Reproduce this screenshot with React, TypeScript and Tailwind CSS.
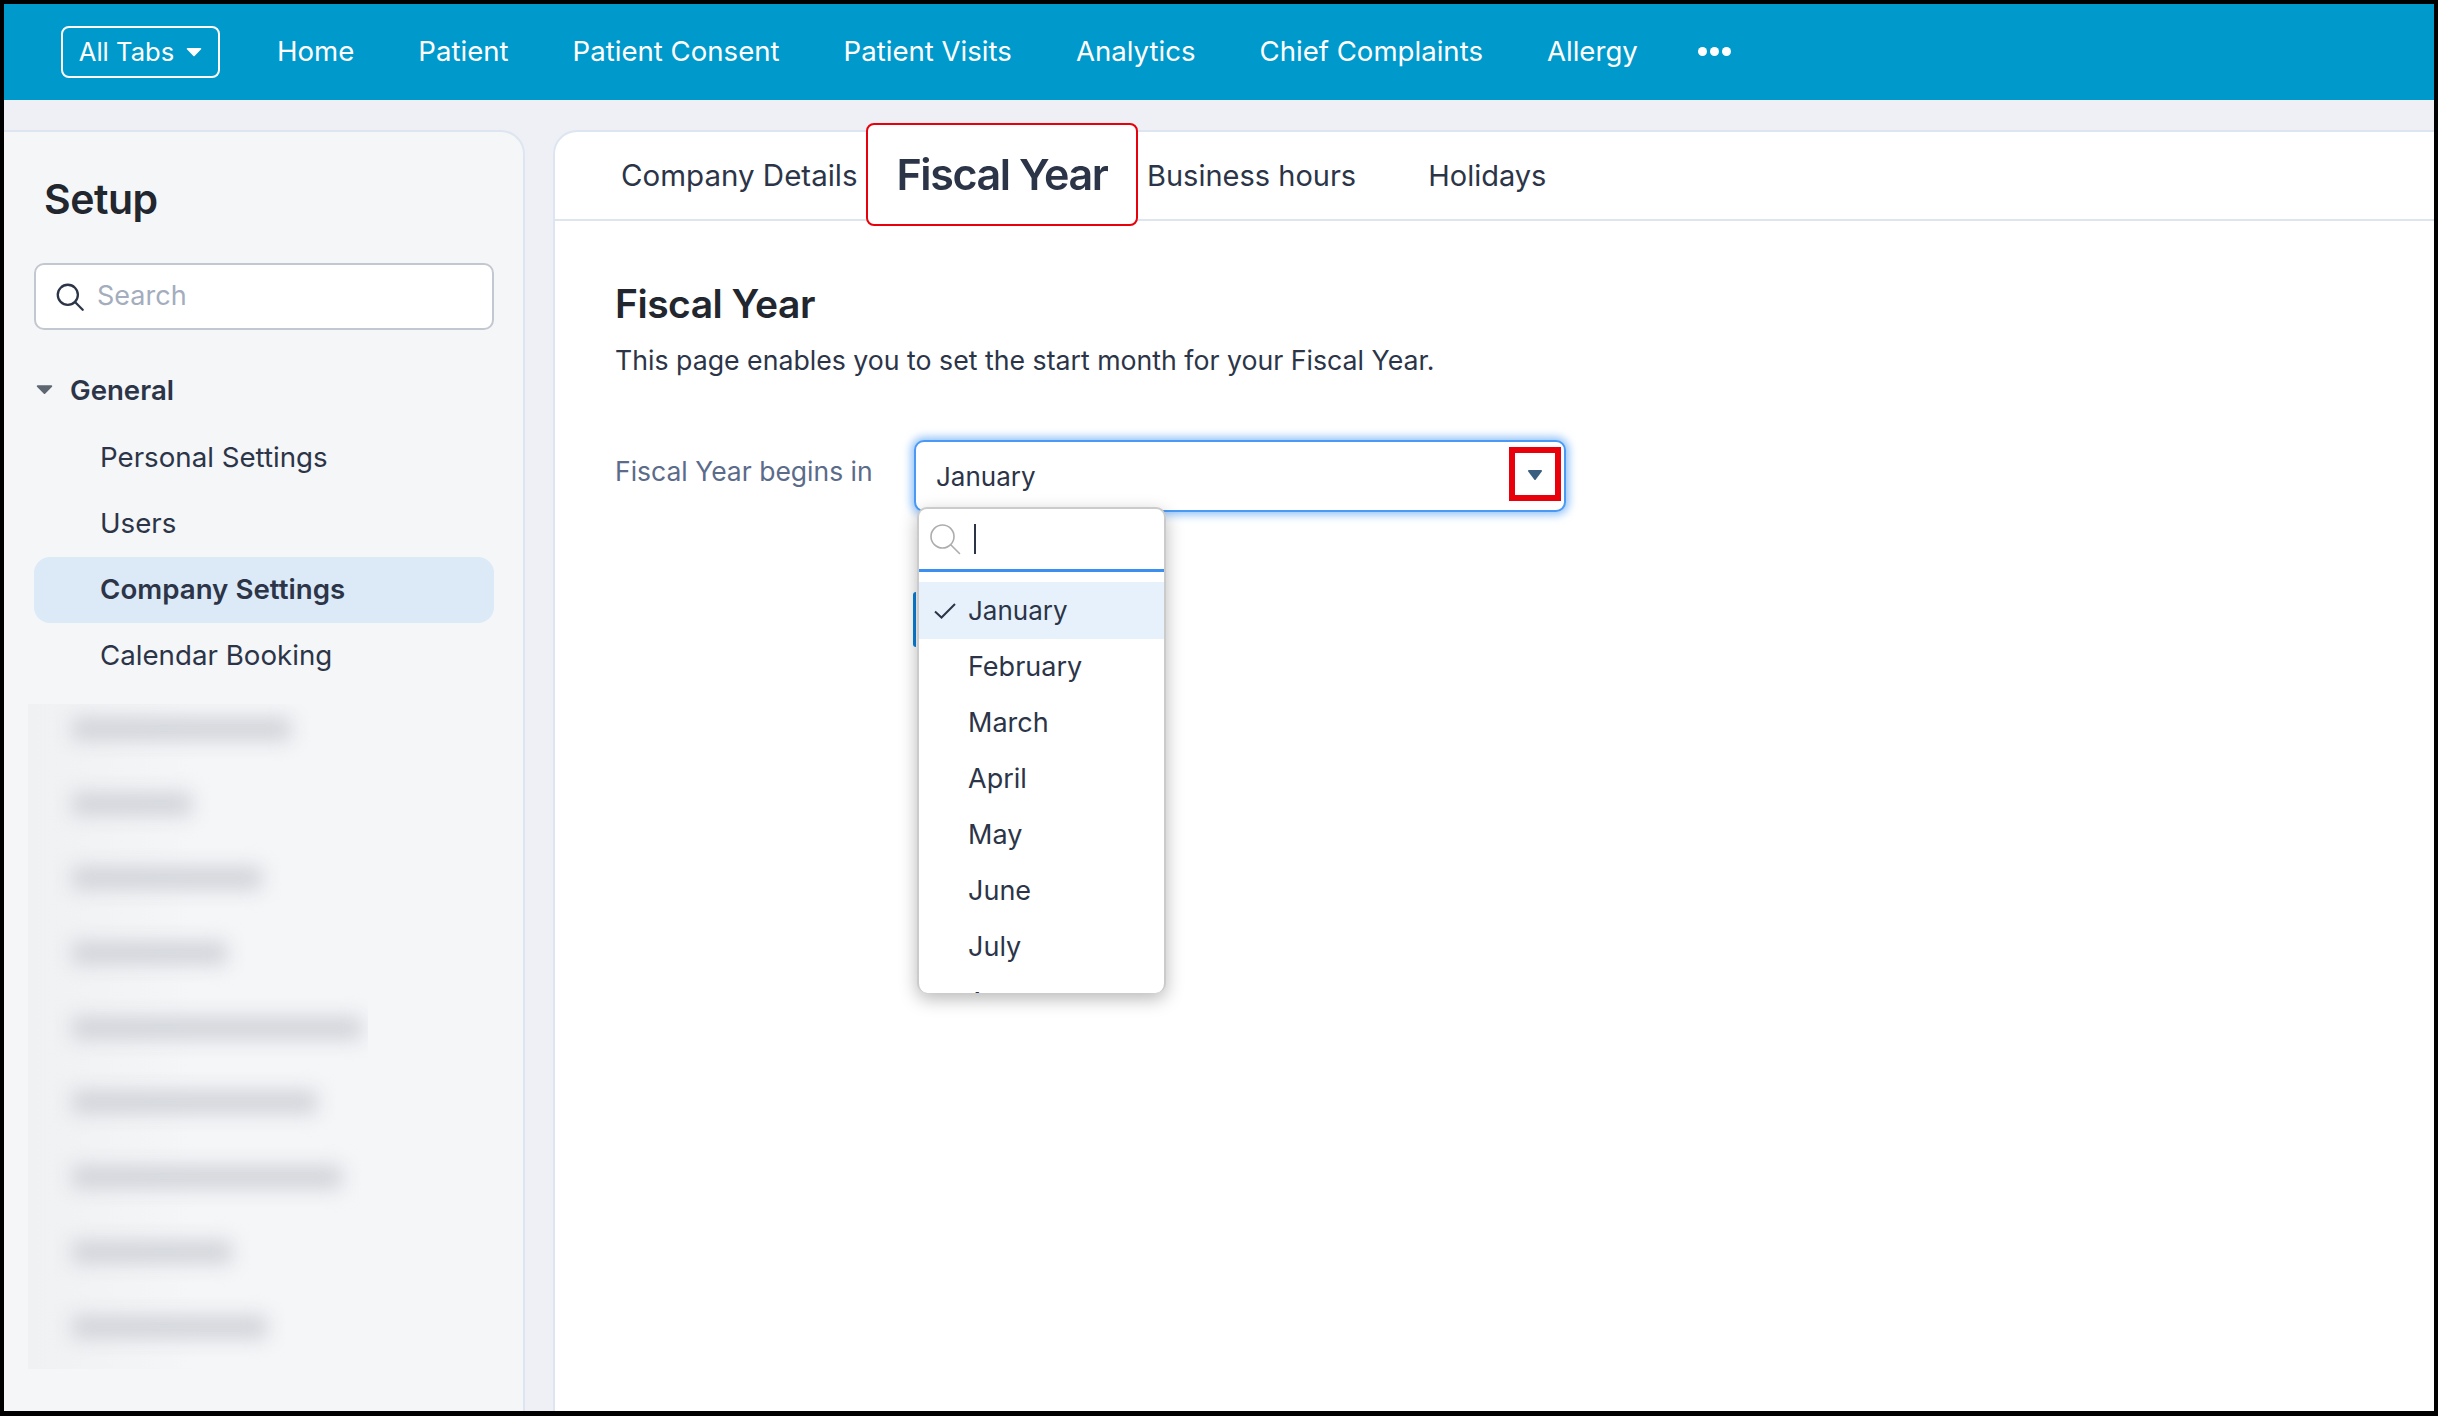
import React from "react";

const nav = ["Home", "Patient", "Patient Consent", "Patient Visits", "Analytics", "Chief Complaints", "Allergy"];
const months = ["February", "March", "April", "May", "June", "July"];
const blurred = [219, 120, 190, 155, 290, 245, 270, 160, 195];

function Caret({ className }: { className: string }) {
  return (
    <svg viewBox="0 0 16 10" className={className}>
      <path d="M1.5 1h13a.8.8 0 0 1 .6 1.3L8.6 9a.8.8 0 0 1-1.2 0L.9 2.3A.8.8 0 0 1 1.5 1z" fill="currentColor" />
    </svg>
  );
}

function Lens({ className, width }: { className: string; width: number }) {
  return (
    <svg viewBox="0 0 32 32" className={className} fill="none" stroke="currentColor" strokeWidth={width}>
      <circle cx="13.5" cy="13.5" r="11.5" />
      <path d="M22 22l8.5 8.5" strokeLinecap="round" />
    </svg>
  );
}

export default function App() {
  return (
    <div className="w-[2438px] h-[1416px] bg-black pt-[4px] pl-[4px] pr-[4px] pb-[5px] font-['Inter','Liberation_Sans',sans-serif] text-[#2c3548] overflow-hidden">
      <div className="w-full h-full flex flex-col bg-[#eef0f5] overflow-hidden">
        <header className="h-[96px] shrink-0 bg-[#0099cc] flex items-center pl-[57px] text-white text-[27.6px]">
          <button className="w-[159px] h-[52px] border-2 border-white rounded-[8px] flex items-center justify-center gap-[12px] text-[25.6px] mr-[57px]">
            <span>All Tabs</span>
            <Caret className="w-[16px] h-[10px]" />
          </button>
          <nav className="flex items-center gap-[64px]">
            {nav.map((n) => (
              <span key={n}>{n}</span>
            ))}
            <span className="flex gap-[3px] ml-[-4px]">
              <i className="w-[9px] h-[9px] rounded-full bg-white" />
              <i className="w-[9px] h-[9px] rounded-full bg-white" />
              <i className="w-[9px] h-[9px] rounded-full bg-white" />
            </span>
          </nav>
        </header>

        <div className="flex-1 flex pt-[30px] gap-[28px] min-h-0">
          <aside className="w-[521px] shrink-0 bg-[#f5f6f8] border-t-2 border-r-2 border-[#dde5f0] rounded-tr-[24px] pl-[30px] pr-[29px]">
            <h2 className="text-[41px] font-semibold leading-[50px] text-[#22262e] mt-[42px] pl-[10px] tracking-[-0.5px]">Setup</h2>
            <div className="mt-[39px] h-[67px] bg-white border-2 border-[#c3c8d0] rounded-[10px] flex items-center pl-[20px] text-[27px] text-[#a3adbd]">
              <Lens className="w-[28px] h-[28px] text-[#2c3548] mr-[13px]" width={2.6} />
              <span>Search</span>
            </div>
            <div className="mt-[27px] h-[68px] flex items-center text-[27.6px] font-semibold">
              <Caret className="w-[17px] h-[11px] text-[#5e6672] ml-[2px] mr-[17px] mb-[4px]" />
              <span>General</span>
            </div>
            <div className="text-[27.7px]">
              <div className="h-[66px] flex items-center pl-[66px]">Personal Settings</div>
              <div className="h-[66px] flex items-center pl-[66px]">Users</div>
              <div className="h-[66px] flex items-center pl-[66px] font-semibold bg-[#dce9f7] rounded-[16px]">Company Settings</div>
              <div className="h-[66px] flex items-center pl-[66px]">Calendar Booking</div>
            </div>
            <div className="mt-[15px] ml-[-6px] w-[340px] h-[665px] overflow-hidden flex flex-col pt-[14px] gap-[52.7px] bg-gradient-to-r from-[#f0f1f3] via-[#f5f6f8] to-[#f5f6f8]">
              {blurred.map((w, i) => (
                <div
                  key={i}
                  className="h-[22px] ml-[44px] shrink-0 bg-[#cfd1d7] blur-[10px]"
                  style={{ width: w }}
                />
              ))}
            </div>
          </aside>

          <main className="flex-1 min-w-0 bg-white border-t-2 border-l-2 border-[#dde5f0] rounded-tl-[24px] relative">
            <div className="h-[89px] border-b-2 border-[#dde5f0] flex items-center pl-[66px] text-[29px]">
              <span className="w-[245px] text-[29.5px]">Company Details</span>
              <div className="w-[272px] h-[103px] shrink-0 mb-[2px] border-2 border-[#e8000a] rounded-[8px] bg-white flex items-center justify-center text-[43px] font-semibold tracking-[-1.4px] blur-[0.6px] relative z-10">
                Fiscal Year
              </div>
              <span className="ml-[9px]">Business hours</span>
              <span className="ml-[72px]">Holidays</span>
            </div>

            <div className="pl-[60px] pt-[60px]">
              <h1 className="text-[39px] font-semibold leading-[46px] text-[#22262e] tracking-[-0.5px]">Fiscal Year</h1>
              <p className="mt-[13px] text-[26.7px] leading-[40px]">This page enables you to set the start month for your Fiscal Year.</p>

              <div className="mt-[60px] flex items-start">
                <label className="w-[299px] pt-[11px] text-[26.5px] leading-[40px] text-[#5b6b8a]">Fiscal Year begins in</label>
                <div className="relative w-[652px] h-[72px] border-2 border-[#4a9af5] rounded-[10px] bg-white shadow-[0_0_9px_3px_rgba(74,154,245,0.6)] flex items-center pl-[20px] text-[26px]">
                  <span>January</span>
                  <div className="absolute right-[3px] top-[5px] w-[52px] h-[54px] border-[6px] border-[#e8000a] flex items-center justify-center">
                    <svg viewBox="0 0 14 10" className="w-[14px] h-[10px] mt-[2px]">
                      <path d="M1 0h12a1 1 0 0 1 .8 1.5L7.8 9.4a1 1 0 0 1-1.6 0L.2 1.5A1 1 0 0 1 1 0z" fill="#3d5f7f" />
                    </svg>
                  </div>

                  <div className="absolute left-[-3px] top-[150px] w-[3px] h-[55px] bg-[#0a7fd8] rounded-l-[3px]" />

                  <div className="absolute left-[1px] top-[65px] w-[249px] h-[486px] z-20 bg-white rounded-[10px] border-t-2 border-l-2 border-r-2 border-[#cbcbcb] shadow-[0_6px_18px_rgba(0,0,0,0.28)] overflow-hidden text-[27px]">
                    <div className="h-[63px] border-b-[3px] border-[#3b8ff0] flex items-center pl-[10px]">
                      <Lens className="w-[32px] h-[32px] text-[#adadad]" width={1.6} />
                      <i className="ml-[13px] w-[2px] h-[30px] bg-[#2c3548]" />
                    </div>
                    <div className="pt-[10px]">
                      <div className="h-[57px] bg-[#e6f1fc] flex items-center">
                        <svg viewBox="0 0 22 16" className="w-[22px] h-[16px] ml-[15px] mr-[12px]" fill="none" stroke="#2c3548" strokeWidth="2">
                          <path d="M1 8.5l6.5 6L21 1" />
                        </svg>
                        <span className="text-[26px]">January</span>
                      </div>
                      {months.map((m) => (
                        <div key={m} className="h-[56px] flex items-center pl-[49px]">{m}</div>
                      ))}
                      <div className="h-[56px] flex items-center pl-[49px]">August</div>
                    </div>
                  </div>
                </div>
              </div>
            </div>
          </main>
        </div>
      </div>
    </div>
  );
}
